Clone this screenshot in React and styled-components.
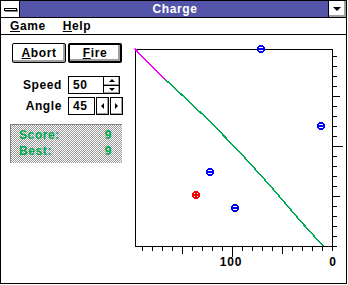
import styled, {createGlobalStyle} from "styled-components";
import React from "react";

const GlobalStyle = createGlobalStyle`
    body {
        margin: 0;
        background: #fff;
    }
`;

const GREEN = "#00a850";

// 플롯 좌표 (svg 안쪽)
const plot = {left: 7, top: 14, right: 204, bottom: 211};

const ticks = Array.from({length: 20}, (_, k) => ({
    k,
    len: k > 0 && k % 10 === 0 ? 10 : k > 0 && k % 5 === 0 ? 7 : 4,
}));

const charges = [
    {x: 133, y: 14, sign: -1},
    {x: 193, y: 91, sign: -1},
    {x: 82, y: 137, sign: -1},
    {x: 68, y: 160, sign: 1},
    {x: 107, y: 173, sign: -1},
];

const pinkPath = [[7, 14], [37, 44.5]];
const greenPath = [
    [37, 44.5],
    [43, 49.5],
    [82, 86.5],
    [112, 117.5],
    [142, 150.5],
    [172, 185.5],
    [195, 211],
];

const pts = (list) => list.map(([x, y]) => `${x},${y}`).join(" ");

function Charge({x, y, sign}) {
    const color = sign > 0 ? "#ff0000" : "#0000ff";
    return (
        <g stroke={color}>
            <circle cx={x} cy={y} r="3" fill="#fff" strokeWidth="1.8"/>
            <line x1={x - 3} y1={y} x2={x + 3} y2={y} strokeWidth="1.4"/>
            {sign > 0 && <line x1={x} y1={y - 3} x2={x} y2={y + 3} strokeWidth="1.4"/>}
        </g>
    );
}

function Chart() {
    return (
        <Plot width="218" height="248" shapeRendering="crispEdges">
            <g stroke="#000" strokeWidth="1">
                <line x1={plot.left} y1={plot.top + 0.5} x2={plot.right} y2={plot.top + 0.5}/>
                <line x1={plot.left + 0.5} y1={plot.top} x2={plot.left + 0.5} y2={plot.bottom}/>
                <line x1={plot.right + 0.5} y1={plot.top} x2={plot.right + 0.5} y2={plot.bottom + 1}/>
                <line x1={plot.left} y1={plot.bottom + 0.5} x2={plot.right + 1} y2={plot.bottom + 0.5}/>
                {ticks.map(({k, len}) => {
                    const y = plot.bottom - k * 10 + 0.5;
                    return y > plot.top ? (
                        <line key={"y" + k} x1={plot.right + 1} y1={y} x2={plot.right + 1 + len} y2={y}/>
                    ) : null;
                })}
                {ticks.map(({k, len}) => {
                    const x = plot.right - k * 10 + 0.5;
                    return x > plot.left ? (
                        <line key={"x" + k} x1={x} y1={plot.bottom + 1} x2={x} y2={plot.bottom + 1 + len}/>
                    ) : null;
                })}
            </g>
            <polyline points={pts(pinkPath)} fill="none" stroke="#ff00ff" strokeWidth="1.5"/>
            <polyline points={pts(greenPath)} fill="none" stroke={GREEN} strokeWidth="1.5"/>
            {charges.map((c, i) => <Charge key={i} {...c}/>)}
            <AxisText x="103" y="231" textAnchor="middle">100</AxisText>
            <AxisText x="205" y="231" textAnchor="middle">0</AxisText>
        </Plot>
    );
}

function Arrow({dir}) {
    const shapes = {
        up: "2,5 5,2 8,5",
        down: "2,2 5,5 8,2",
        left: "5,1 2,4 5,7",
        right: "2,1 5,4 2,7",
    };
    const vertical = dir === "up" || dir === "down";
    return (
        <svg width={vertical ? 10 : 7} height={vertical ? 7 : 8}>
            <polygon points={shapes[dir]} fill="#000"/>
        </svg>
    );
}

export default function App() {
    return (
        <>
            <GlobalStyle/>
            <Window>
                <TitleBar>
                    <SysMenu><SysBar/></SysMenu>
                    <Caption>Charge</Caption>
                    <MinButton><DownTriangle/></MinButton>
                </TitleBar>
                <MenuBar>
                    <MenuItem><u>G</u>ame</MenuItem>
                    <MenuItem><u>H</u>elp</MenuItem>
                </MenuBar>
                <Body>
                    <Controls>
                        <ButtonRow>
                            <PushButton><u>A</u>bort</PushButton>
                            <PushButton $default><u>F</u>ire</PushButton>
                        </ButtonRow>
                        <FieldRow>
                            <Label>Speed</Label>
                            <ValueBox $w={36}>50</ValueBox>
                            <SpinStack>
                                <SpinHalf><Arrow dir="up"/></SpinHalf>
                                <SpinHalf><Arrow dir="down"/></SpinHalf>
                            </SpinStack>
                        </FieldRow>
                        <FieldRow $gap={9}>
                            <Label>Angle</Label>
                            <ValueBox $w={27}>45</ValueBox>
                            <SideButton><Arrow dir="left"/></SideButton>
                            <SideButton><Arrow dir="right"/></SideButton>
                        </FieldRow>
                        <ScorePanel>
                            <span>Score:</span><span>9</span>
                            <span>Best:</span><span>9</span>
                        </ScorePanel>
                    </Controls>
                    <Chart/>
                </Body>
            </Window>
        </>
    );
}

// 스타일
const sysFont = `
    font-family: "Liberation Sans", Arial, sans-serif;
    font-weight: bold;
    font-size: 12px;
    letter-spacing: 0.6px;
`;

const Window = styled.div`
    width: 347px;
    height: 284px;
    box-sizing: border-box;
    border: 1px solid #000;
    display: flex;
    flex-direction: column;
    background: #fff;
    ${sysFont};
    color: #000;
`;
const TitleBar = styled.div`
    height: 16px;
    display: flex;
    border-bottom: 1px solid #000;
`;
const SysMenu = styled.div`
    width: 18px;
    border-right: 1px solid #000;
    background: #fff;
    display: flex;
    align-items: center;
    justify-content: center;
`;
const SysBar = styled.div`
    width: 11px;
    height: 1px;
    border: 1px solid #000;
    background: #fff;
    box-shadow: 1px 1px 0 #808080;
`;
const Caption = styled.div`
    flex: 1;
    background: #5454a8;
    color: #fff;
    display: flex;
    align-items: center;
    justify-content: center;
    padding-left: 2px;
`;
const MinButton = styled.div`
    width: 17px;
    border-left: 1px solid #000;
    background: #fff;
    box-shadow: inset -2px -2px 0 #a0a0a0;
    display: flex;
    align-items: center;
    justify-content: center;
`;
const DownTriangle = styled.div`
    width: 0;
    height: 0;
    margin: 0 2px 1px 0;
    border-left: 4px solid transparent;
    border-right: 4px solid transparent;
    border-top: 4px solid #000;
`;
const MenuBar = styled.div`
    height: 16px;
    border-bottom: 1px solid #000;
    display: flex;
    align-items: center;
    padding-left: 9px;
    gap: 17px;
`;
const MenuItem = styled.span`
    line-height: 16px;
`;
const Body = styled.div`
    flex: 1;
    display: flex;
`;
const Controls = styled.div`
    width: 127px;
    padding: 8px 0 0 9px;
    box-sizing: border-box;
    display: flex;
    flex-direction: column;
`;
const ButtonRow = styled.div`
    display: flex;
    gap: 2px;
    padding-left: 2px;
    margin-bottom: 13px;
`;
const PushButton = styled.div`
    width: 54px;
    height: 20px;
    box-sizing: border-box;
    border: ${(p) => (p.$default ? "2px" : "1px")} solid #000;
    border-radius: 2px;
    background: #fff;
    box-shadow: inset -2px -2px 0 #a0a0a0;
    display: flex;
    align-items: center;
    justify-content: center;
    padding-bottom: 1px;
`;
const FieldRow = styled.div`
    display: flex;
    align-items: stretch;
    height: 18px;
    margin-bottom: ${(p) => p.$gap || 3}px;
`;
const Label = styled.div`
    width: 52px;
    margin-right: 6px;
    text-align: right;
    line-height: 18px;
`;
const ValueBox = styled.div`
    width: ${(p) => p.$w}px;
    box-sizing: border-box;
    border: 1px solid #000;
    padding-left: 4px;
    line-height: 16px;
`;
const SpinStack = styled.div`
    width: 16px;
    display: flex;
    flex-direction: column;
    border: 1px solid #000;
    border-left: none;
    box-sizing: border-box;
`;
const SpinHalf = styled.div`
    flex: 1;
    background: #fff;
    box-shadow: inset -1px -1px 0 #a0a0a0;
    display: flex;
    align-items: center;
    justify-content: center;
    & + & {
        border-top: 1px solid #000;
    }
`;
const SideButton = styled.div`
    width: 13px;
    box-sizing: border-box;
    border: 1px solid #000;
    margin-left: 1px;
    background: #fff;
    box-shadow: inset -1px -1px 0 #a0a0a0;
    display: flex;
    align-items: center;
    justify-content: center;
`;
const ScorePanel = styled.div`
    width: 112px;
    height: 39px;
    box-sizing: border-box;
    border-top: 1px solid #808080;
    border-left: 1px solid #808080;
    background-image: repeating-conic-gradient(#999 0% 25%, #fff 0% 50%);
    background-size: 2px 2px;
    color: ${GREEN};
    display: grid;
    grid-template-columns: 1fr auto;
    grid-auto-rows: 16px;
    align-items: center;
    padding: 2px 10px 0 8px;
`;
const Plot = styled.svg`
    display: block;
`;
const AxisText = styled.text`
    font-family: "Liberation Sans", Arial, sans-serif;
    font-weight: bold;
    font-size: 12px;
    letter-spacing: 0.8px;
    fill: #000;
`;
